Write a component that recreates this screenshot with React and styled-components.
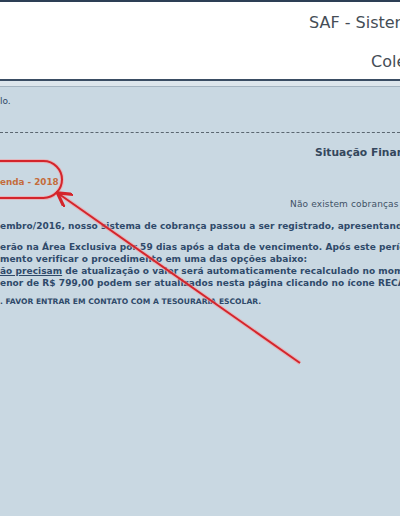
import React from 'react';
import styled, { createGlobalStyle } from 'styled-components';

const GlobalStyle = createGlobalStyle`
  html, body {
    margin: 0;
    padding: 0;
    background: #c9d8e2;
    overflow: hidden;
  }
  body {
    font-family: "DejaVu Sans", Verdana, sans-serif;
    color: #2e4866;
  }
`;

const Page = styled.div`
  position: relative;
  width: 400px;
  height: 516px;
  overflow: hidden;
`;

const Header = styled.header`
  background: #fff;
  border-top: 2px solid #2d3f55;
  border-bottom: 2px solid #3a4d63;
  height: 77px;
  display: flex;
  flex-direction: column;
  color: #454d56;
  font-size: 16px;
  white-space: nowrap;
`;

const HeaderLine = styled.div`
  padding-left: ${p => p.indent}px;
  margin-top: ${p => p.top}px;
  line-height: 18px;
`;

const SubBand = styled.div`
  height: 5px;
  background: #dde6ec;
  border-bottom: 1px solid #a4b4c0;
`;

const Content = styled.main`
  display: flex;
  flex-direction: column;
  white-space: nowrap;
`;

const Note = styled.p`
  margin: 8px 0 0;
  font-size: 9px;
  line-height: 12px;
`;

const Divider = styled.hr`
  margin: 25px 0 0;
  border: 0;
  border-top: 1px dashed #5a6670;
`;

const SectionTitle = styled.h2`
  margin: 13px 0 0 315px;
  font-size: 10.7px;
  font-weight: bold;
  line-height: 14px;
  color: #34475c;
`;

const YearLabel = styled.div`
  margin-top: 15px;
  font-size: 8.8px;
  font-weight: bold;
  line-height: 14px;
  color: #c46c3c;
`;

const Empty = styled.div`
  margin: 9px 0 0 290px;
  font-size: 9px;
  letter-spacing: 0.15px;
  line-height: 12px;
  color: #3f5266;
`;

const Paragraph = styled.div`
  margin-top: ${p => p.top}px;
  font-size: 9px;
  letter-spacing: 0.05px;
  font-weight: bold;
  line-height: 12px;
  color: #2f4a6a;
`;

const Warning = styled.div`
  margin: 7px 0 0 0;
  font-size: 7.6px;
  font-weight: bold;
  line-height: 12px;
  color: #2f4a6a;
`;

const Under = styled.span`
  text-decoration: underline;
`;

const Annotation = styled.svg`
  position: absolute;
  left: 0;
  top: 0;
  pointer-events: none;
`;

export default function App() {
  return (
    <Page>
      <GlobalStyle />
      <Header>
        <HeaderLine indent={309} top={12}>SAF - Sistema Financeiro</HeaderLine>
        <HeaderLine indent={371} top={21}>Colégio</HeaderLine>
      </Header>
      <SubBand />
      <Content>
        <Note>lo.</Note>
        <Divider />
        <SectionTitle>Situação Financeira</SectionTitle>
        <YearLabel>enda - 2018</YearLabel>
        <Empty>Não existem cobranças pendentes</Empty>
        <Paragraph top={10}>
          embro/2016, nosso sistema de cobrança passou a ser registrado, apresentando
        </Paragraph>
        <Paragraph top={9}>
          erão na Área Exclusiva por 59 dias após a data de vencimento. Após este período
          <br />
          mento verificar o procedimento em uma das opções abaixo:
          <br />
          <Under>ão precisam</Under> de atualização o valor será automaticamente recalculado no momento
          <br />
          enor de R$ 799,00 podem ser atualizados nesta página clicando no ícone RECALCULAR
        </Paragraph>
        <Warning>. FAVOR ENTRAR EM CONTATO COM A TESOURARIA ESCOLAR.</Warning>
      </Content>
      <Annotation width="400" height="516" viewBox="0 0 400 516">
        <defs>
          <marker id="head" markerWidth="8" markerHeight="8" refX="6" refY="4" orient="auto">
            <path d="M0,0 L7,4 L0,8" fill="none" stroke="#d4252b" strokeWidth="1.6" />
          </marker>
        </defs>
        <rect x="-40" y="161" width="102" height="37" rx="18.5" fill="none" stroke="#f3a0a4" strokeWidth="4" opacity="0.6" />
        <rect x="-40" y="161" width="102" height="37" rx="18.5" fill="none" stroke="#d4252b" strokeWidth="2" />
        <line x1="300" y1="363" x2="59" y2="194" stroke="#f3a0a4" strokeWidth="4" opacity="0.6" />
        <line x1="300" y1="363" x2="59" y2="194" stroke="#d4252b" strokeWidth="2" markerEnd="url(#head)" />
      </Annotation>
    </Page>
  );
}
